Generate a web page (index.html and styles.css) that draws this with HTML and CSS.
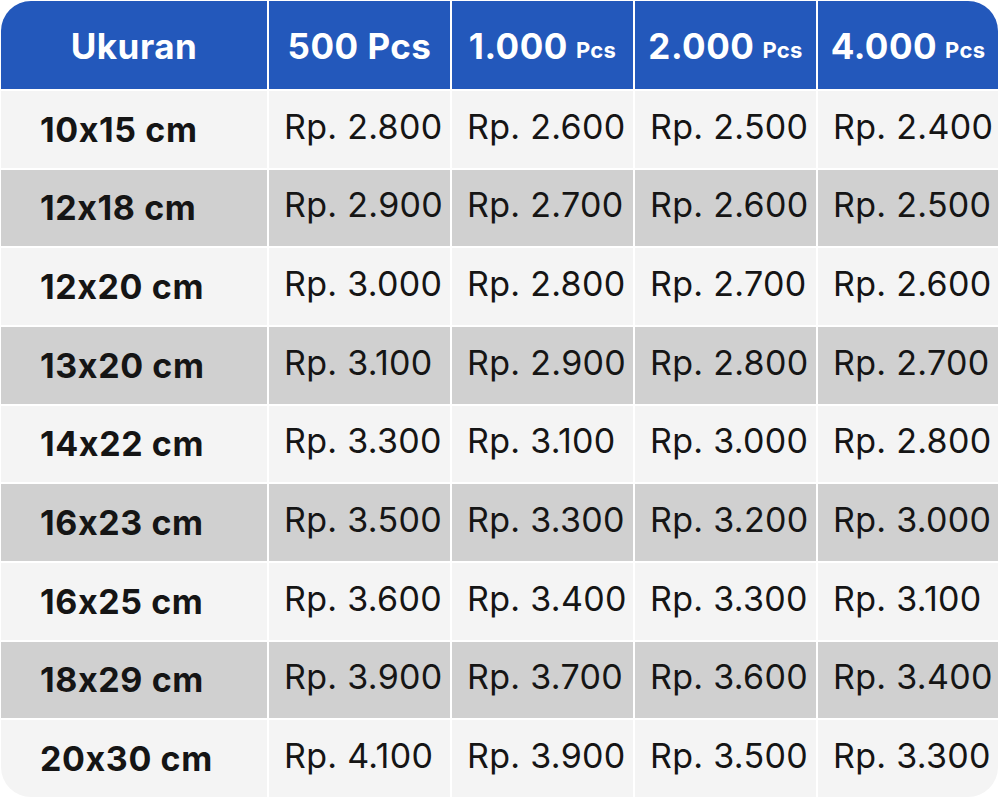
FILE: index.html
```html
<!DOCTYPE html>
<html lang="id">
<head>
<meta charset="utf-8">
<title>Daftar Harga</title>
<link rel="stylesheet" href="styles.css">
</head>
<body>
<div class="price-table">
  <div class="cell head">Ukuran</div>
  <div class="cell head">500 Pcs</div>
  <div class="cell head">1.000 <small>Pcs</small></div>
  <div class="cell head">2.000 <small>Pcs</small></div>
  <div class="cell head">4.000 <small>Pcs</small></div>

  <div class="cell size light">10x15 cm</div>
  <div class="cell price light">Rp. 2.800</div>
  <div class="cell price light">Rp. 2.600</div>
  <div class="cell price light">Rp. 2.500</div>
  <div class="cell price light">Rp. 2.400</div>

  <div class="cell size dark">12x18 cm</div>
  <div class="cell price dark">Rp. 2.900</div>
  <div class="cell price dark">Rp. 2.700</div>
  <div class="cell price dark">Rp. 2.600</div>
  <div class="cell price dark">Rp. 2.500</div>

  <div class="cell size light">12x20 cm</div>
  <div class="cell price light">Rp. 3.000</div>
  <div class="cell price light">Rp. 2.800</div>
  <div class="cell price light">Rp. 2.700</div>
  <div class="cell price light">Rp. 2.600</div>

  <div class="cell size dark">13x20 cm</div>
  <div class="cell price dark">Rp. 3.100</div>
  <div class="cell price dark">Rp. 2.900</div>
  <div class="cell price dark">Rp. 2.800</div>
  <div class="cell price dark">Rp. 2.700</div>

  <div class="cell size light">14x22 cm</div>
  <div class="cell price light">Rp. 3.300</div>
  <div class="cell price light">Rp. 3.100</div>
  <div class="cell price light">Rp. 3.000</div>
  <div class="cell price light">Rp. 2.800</div>

  <div class="cell size dark">16x23 cm</div>
  <div class="cell price dark">Rp. 3.500</div>
  <div class="cell price dark">Rp. 3.300</div>
  <div class="cell price dark">Rp. 3.200</div>
  <div class="cell price dark">Rp. 3.000</div>

  <div class="cell size light">16x25 cm</div>
  <div class="cell price light">Rp. 3.600</div>
  <div class="cell price light">Rp. 3.400</div>
  <div class="cell price light">Rp. 3.300</div>
  <div class="cell price light">Rp. 3.100</div>

  <div class="cell size dark">18x29 cm</div>
  <div class="cell price dark">Rp. 3.900</div>
  <div class="cell price dark">Rp. 3.700</div>
  <div class="cell price dark">Rp. 3.600</div>
  <div class="cell price dark">Rp. 3.400</div>

  <div class="cell size light">20x30 cm</div>
  <div class="cell price light">Rp. 4.100</div>
  <div class="cell price light">Rp. 3.900</div>
  <div class="cell price light">Rp. 3.500</div>
  <div class="cell price light">Rp. 3.300</div>
</div>
</body>
</html>
```

FILE: styles.css
```css
html, body {
  margin: 0;
  padding: 0;
  background: #ffffff;
}
body {
  padding: 1px 0 0 1px;
  font-family: Inter, "Noto Sans", sans-serif;
  font-feature-settings: "calt" 0;
}
.price-table {
  width: 997px;
  height: 796px;
  display: grid;
  grid-template-columns: 266px 181px 181px 181px 180px;
  grid-template-rows: 88px repeat(9, 1fr);
  gap: 2px;
  background: #ffffff;
  border-radius: 30px;
  overflow: hidden;
}
.cell {
  display: flex;
  align-items: center;
  color: #151515;
  white-space: nowrap;
}
.head {
  background: #2358bb;
  color: #ffffff;
  font-weight: 700;
  font-size: 35px;
  letter-spacing: 0.5px;
  justify-content: center;
  padding-top: 2px;
}
.head small {
  font-size: 22px;
  font-weight: 700;
  letter-spacing: 0.3px;
  margin-left: 8px;
  padding-top: 7px;
}
.light { background: #f4f4f4; }
.dark { background: #d0d0d0; }
.size {
  font-weight: 700;
  font-size: 34px;
  letter-spacing: 0.6px;
  padding-left: 39px;
}
.price {
  font-weight: 400;
  font-size: 34px;
  letter-spacing: 0.3px;
  padding-left: 15px;
  padding-bottom: 6px;
}
```
